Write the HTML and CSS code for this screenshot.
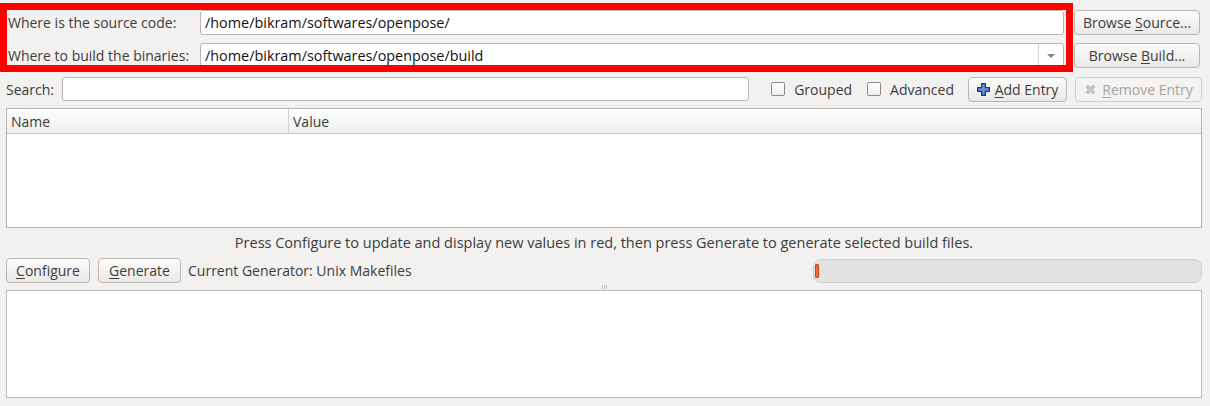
FILE: index.html
```html
<!DOCTYPE html>
<html lang="en">
<head>
    <meta charset="UTF-8">
    <title>CMake</title>
    <link rel="stylesheet" href="styles.css">
</head>
<body>

<div class="window">
    <div class="paths">
        <label class="path-label">Where is the source code:</label>
        <div class="field">/home/bikram/softwares/openpose/</div>
        <button class="btn"><span>Browse <u>S</u>ource...</span></button>

        <label class="path-label">Where to build the binaries:</label>
        <div class="field combo">
            <span class="combo-text">/home/bikram/softwares/openpose/build</span>
            <span class="combo-arrow"></span>
        </div>
        <button class="btn"><span>Browse <u>B</u>uild...</span></button>

        <div class="highlight"></div>
    </div>

    <div class="search-row">
        <label class="search-label">Search:</label>
        <div class="field search-field"></div>
        <label class="check grouped"><span class="box"></span>Grouped</label>
        <label class="check advanced"><span class="box"></span>Advanced</label>
        <button class="btn btn-add">
            <svg width="13" height="13" viewBox="0 0 13 13">
                <path d="M4.5 0.5h4v4h4v4h-4v4h-4v-4h-4v-4h4z" fill="#3d5fb8" stroke="#1c2b63" stroke-width="1"/>
                <path d="M5.5 1.5h2v4h4v2h-4v4h-2v-4h-4v-2h4z" fill="#6f92e0"/>
            </svg>
            <span><u>A</u>dd Entry</span>
        </button>
        <button class="btn btn-remove disabled">
            <svg width="13" height="13" viewBox="0 0 13 13">
                <path d="M2 4l2-2 2.5 2.5 2.5-2.5 2 2-2.5 2.5 2.5 2.5-2 2-2.5-2.5-2.5 2.5-2-2 2.5-2.5z" fill="#c8c6c3" stroke="#b3b0ac" stroke-width="0.8"/>
            </svg>
            <span><u>R</u>emove Entry</span>
        </button>
    </div>

    <div class="table">
        <div class="table-head">
            <div class="col-name">Name</div>
            <div class="col-value">Value</div>
        </div>
    </div>

    <p class="hint">Press Configure to update and display new values in red, then press Generate to generate selected build files.</p>

    <div class="action-row">
        <button class="btn btn-wide"><span><u>C</u>onfigure</span></button>
        <button class="btn btn-wide"><span><u>G</u>enerate</span></button>
        <span class="generator">Current Generator: Unix Makefiles</span>
        <div class="progress"><span class="chunk"></span></div>
    </div>

    <div class="splitter"><span></span><span></span><span></span></div>

    <div class="output"></div>
</div>

</body>
</html>
```

FILE: styles.css
```css
/* Ambiance-like look */
body {
    margin: 0;
    background-color: #f2f1f0;
    color: #3c3c3c;
    font-family: "Open Sans", "Noto Sans", sans-serif;
    font-size: 14px;
}
.window {
    padding: 10px 8px 0 6px;
}
u {
    text-decoration: underline;
    text-underline-offset: 2px;
}

/* Top path rows */
.paths {
    position: relative;
    display: grid;
    grid-template-columns: 182px 1fr 126px;
    column-gap: 10px;
    row-gap: 8px;
    padding-left: 2px;
    padding-right: 2px;
}
.path-label {
    display: flex;
    align-items: center;
    height: 25px;
}
.field {
    background-color: #fff;
    border: 1px solid #b9b6b1;
    border-radius: 3px;
    box-sizing: border-box;
    height: 25px;
    padding: 0 4px;
    display: flex;
    align-items: center;
    color: #111;
    font-size: 14.4px;
}
.combo {
    padding-right: 0;
}
.combo-text {
    flex: 1;
}
.combo-arrow {
    width: 24px;
    height: 100%;
    border-left: 1px solid #d6d3cf;
    position: relative;
}
.combo-arrow::after {
    content: "";
    position: absolute;
    left: 8px;
    top: 10px;
    border-left: 4px solid transparent;
    border-right: 4px solid transparent;
    border-top: 4px solid #8a8782;
}
.highlight {
    position: absolute;
    left: -6px;
    top: -7px;
    width: 1059px;
    height: 55px;
    border: 7px solid #ff0000;
    pointer-events: none;
}

.btn {
    font-family: inherit;
    font-size: 14px;
    color: #3c3c3c;
    height: 25px;
    padding: 0 7px;
    border: 1px solid #bab7b2;
    border-radius: 4px;
    background: linear-gradient(#fbfbfa, #ebe9e7);
    box-sizing: border-box;
    display: inline-flex;
    align-items: center;
    justify-content: center;
    white-space: nowrap;
    flex-shrink: 0;
}
.btn svg {
    margin-right: 5px;
}
.btn.disabled {
    color: #a5a29e;
    background: #f4f3f2;
    border-color: #d2cfcb;
}

/* Search row */
.search-row {
    display: flex;
    align-items: center;
    margin-top: 9px;
    height: 24px;
}
.search-label {
    width: 56px;
    flex-shrink: 0;
}
.search-field {
    flex: 1;
    height: 24px;
    margin-right: 22px;
}
.check {
    display: flex;
    align-items: center;
    gap: 9px;
    flex-shrink: 0;
}
.check.grouped {
    margin-right: 15px;
}
.check.advanced {
    margin-right: 14px;
}
.box {
    width: 12px;
    height: 12px;
    border: 1px solid #8e8b86;
    border-radius: 2px;
    background: linear-gradient(#fff, #f1f0ee);
}
.btn-add {
    width: 99px;
    margin-right: 8px;
}
.btn-remove {
    width: 127px;
}

/* Cache table */
.table {
    margin-top: 7px;
    height: 120px;
    border: 1px solid #b9b6b1;
    background-color: #fff;
    box-sizing: border-box;
}
.table-head {
    display: flex;
    height: 25px;
    background: linear-gradient(#fefefe, #f0efed);
    border-bottom: 1px solid #c6c3bf;
    box-sizing: border-box;
}
.col-name {
    width: 277px;
    padding-left: 4px;
    border-right: 1px solid #d4d1cd;
    display: flex;
    align-items: center;
}
.col-value {
    padding-left: 4px;
    display: flex;
    align-items: center;
}

.hint {
    margin: 5px 0 0;
    text-align: center;
    height: 20px;
    line-height: 20px;
    font-size: 14.5px;
}

/* Configure / generate */
.action-row {
    display: flex;
    align-items: center;
    gap: 8px;
    margin-top: 5px;
    height: 25px;
}
.btn-wide {
    width: 84px;
}
.btn-wide + .btn-wide {
    width: 83px;
}
.generator {
    flex: 1;
    margin-left: -1px;
}
.progress {
    width: 386px;
    height: 22px;
    border: 1px solid #d3d0cc;
    border-radius: 8px;
    background-color: #e3e2e0;
    display: flex;
    align-items: center;
    padding-left: 1px;
}
.chunk {
    width: 2px;
    height: 12px;
    background-color: #ef6b33;
    border: 1px solid #c8491a;
    border-radius: 1px;
}

.splitter {
    display: flex;
    justify-content: center;
    gap: 1px;
    height: 7px;
    align-items: center;
}
.splitter span {
    width: 1px;
    height: 4px;
    background-color: #c9c6c2;
}

.output {
    height: 108px;
    border: 1px solid #bdbab5;
    background-color: #fff;
    box-sizing: border-box;
}
```
